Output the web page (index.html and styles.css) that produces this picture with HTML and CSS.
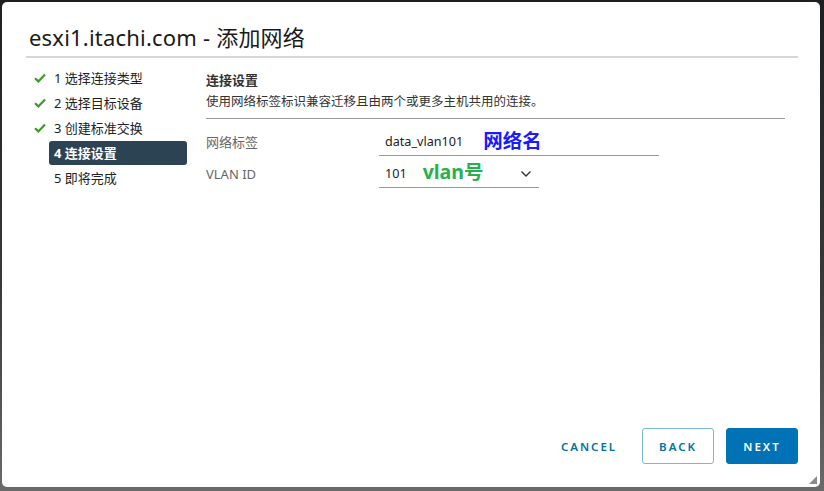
FILE: index.html
```html
<!DOCTYPE html>
<html lang="zh">
<head>
<meta charset="utf-8">
<link rel="stylesheet" href="styles.css">
</head>
<body>
<div class="dialog">
  <div class="header">
    <h1 class="title">esxi1.itachi.com - 添加网络</h1>
  </div>
  <div class="body">
    <ul class="steps">
      <li class="step done"><span class="check"><svg width="12" height="10" viewBox="0 0 12 10"><path d="M1 5.2 L4.4 8.4 L11 1.4" fill="none" stroke="#3c9a28" stroke-width="2.2"/></svg></span><span class="label">1 选择连接类型</span></li>
      <li class="step done"><span class="check"><svg width="12" height="10" viewBox="0 0 12 10"><path d="M1 5.2 L4.4 8.4 L11 1.4" fill="none" stroke="#3c9a28" stroke-width="2.2"/></svg></span><span class="label">2 选择目标设备</span></li>
      <li class="step done"><span class="check"><svg width="12" height="10" viewBox="0 0 12 10"><path d="M1 5.2 L4.4 8.4 L11 1.4" fill="none" stroke="#3c9a28" stroke-width="2.2"/></svg></span><span class="label">3 创建标准交换</span></li>
      <li class="step active"><span class="check"></span><span class="label">4 连接设置</span></li>
      <li class="step"><span class="check"></span><span class="label">5 即将完成</span></li>
    </ul>
    <div class="content">
      <div class="section-head">
        <div class="section-title">连接设置</div>
        <div class="section-desc">使用网络标签标识兼容迁移且由两个或更多主机共用的连接。</div>
      </div>
      <div class="form">
        <div class="row">
          <div class="field-label">网络标签</div>
          <div class="input wide"><span class="value">data_vlan101</span><span class="note blue">网络名</span></div>
        </div>
        <div class="row">
          <div class="field-label">VLAN ID</div>
          <div class="input narrow"><span class="value">101</span><span class="note green">vlan号</span>
            <svg class="chev" width="12" height="8" viewBox="0 0 12 8"><path d="M1.5 1.5 L6 6 L10.5 1.5" fill="none" stroke="#333" stroke-width="1.4"/></svg>
          </div>
        </div>
      </div>
    </div>
  </div>
  <div class="footer">
    <button class="btn link">CANCEL</button>
    <button class="btn outline">BACK</button>
    <button class="btn primary">NEXT</button>
  </div>
  <svg class="grip" width="8" height="8" viewBox="0 0 8 8"><path d="M8 0 L8 8 L0 8 Z" fill="#8a8a8a"/></svg>
</div>
</body>
</html>
```
FILE: styles.css
```css
html, body {
  margin: 0;
  padding: 0;
}
body {
  width: 824px;
  height: 491px;
  background: linear-gradient(#1d1f21, #3a3a3a 60%, #6a6a6a);
  font-family: "Noto Sans", "Noto Sans CJK SC", sans-serif;
  color: #333;
  overflow: hidden;
}
.dialog {
  position: relative;
  margin: 2px 0 0 2px;
  width: 818px;
  height: 485px;
  background: #fff;
  border-radius: 5px;
  display: flex;
  flex-direction: column;
  box-sizing: border-box;
}
.header {
  padding: 20px 22px 0 24px;
}
.title {
  margin: 0;
  font-weight: 400;
  font-size: 22px;
  line-height: 30px;
  color: #1a1a1a;
  padding: 0 0 4px 3px;
  border-bottom: 2px solid #d7d7d7;
  letter-spacing: 0.2px;
}
.body {
  display: flex;
  flex: 1;
  padding-top: 7px;
}
.steps {
  list-style: none;
  margin: 0;
  padding: 0 0 0 32px;
  width: 153px;
  flex: none;
}
.step {
  display: flex;
  align-items: center;
  height: 25px;
  font-size: 13px;
}
.check {
  width: 15px;
  flex: none;
  display: flex;
  align-items: center;
}
.label {
  flex: 1;
  height: 24px;
  line-height: 24px;
  padding-left: 5px;
  border-radius: 3px;
  color: #222;
}
.step.active .label {
  background: #2b4352;
  color: #fff;
  font-weight: 700;
}
.content {
  flex: 1;
  padding: 0 35px 0 19px;
}
.section-head {
  border-bottom: 1px solid #9a9a9a;
  padding: 6px 0 5px 0;
}
.section-title {
  font-size: 13px;
  font-weight: 700;
  color: #333;
  line-height: 18px;
}
.section-desc {
  font-size: 12.5px;
  color: #333;
  line-height: 22px;
  margin-top: 2px;
}
.form {
  padding-top: 9px;
}
.row {
  display: flex;
  align-items: flex-start;
  height: 32px;
}
.field-label {
  width: 173px;
  flex: none;
  font-size: 13px;
  color: #666;
  line-height: 28px;
}
.input {
  display: flex;
  align-items: center;
  height: 28px;
  border-bottom: 1px solid #9a9a9a;
  box-sizing: border-box;
  padding-left: 6px;
}
.input.wide { width: 280px; }
.input.narrow { width: 160px; }
.value {
  font-size: 12.6px;
  color: #222;
}
.note {
  font-weight: 700;
  font-size: 19.5px;
  line-height: 20px;
}
.note.blue { color: #1a1aff; margin-left: 20px; margin-top: -1px; }
.note.green { color: #27b04d; margin-left: 16px; margin-top: -4px; }
.chev {
  margin-left: auto;
  margin-right: 7px;
}
.footer {
  display: flex;
  justify-content: flex-end;
  align-items: center;
  padding: 0 22px 23px 0;
  gap: 12px;
}
.btn {
  font-family: "Noto Sans", sans-serif;
  font-size: 11.5px;
  font-weight: 600;
  letter-spacing: 2px;
  height: 36px;
  border-radius: 3px;
  padding: 0;
  cursor: pointer;
}
.btn.link {
  background: none;
  border: none;
  color: #0072a3;
  width: 72px;
  margin-right: 5px;
}
.btn.outline {
  width: 72px;
  background: #fff;
  border: 1px solid #7bb7d6;
  color: #0072a3;
}
.btn.primary {
  width: 72px;
  background: #0072b5;
  border: 1px solid #0072b5;
  color: #fff;
}
.grip {
  position: absolute;
  right: 3px;
  bottom: 3px;
}
```
